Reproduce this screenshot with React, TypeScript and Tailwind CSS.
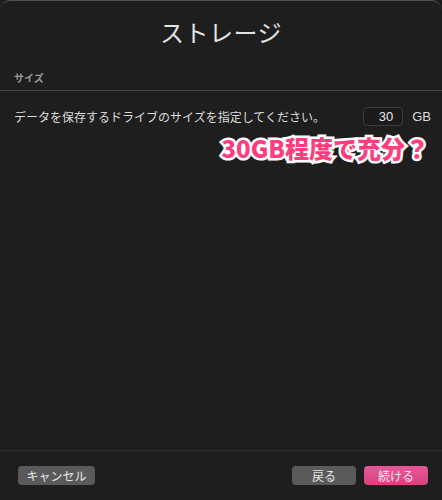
export default function App() {
  return (
    <div
      className="w-[442px] h-[500px] bg-[#1c1c1c] overflow-hidden"
      style={{ fontFamily: '"Noto Sans CJK JP", "Noto Sans", sans-serif' }}
    >
      <div className="flex flex-col h-full bg-[#1e1e1e] rounded-t-[10px] border-t border-[#505050]">
        {/* Title */}
        <h1 className="pt-[15px] text-center text-[24px] leading-[32px] text-[#e2e2e2] tracking-[0.5px]">
          ストレージ
        </h1>

        {/* Section label */}
        <div className="mt-[23px] px-[14px] text-[10px] leading-[14px] text-[#9a9a9a] font-bold">
          サイズ
        </div>
        <div className="mt-[5px] h-px bg-[#464646]" />

        {/* Size row */}
        <div className="mt-[16px] flex items-center px-[14px]">
          <span className="flex-1 text-[12px] leading-[18px] text-[#dcdcdc]">
            データを保存するドライブのサイズを指定してください。
          </span>
          <div className="w-[40px] h-[19px] rounded-[4px] border border-[#3c3c3c] bg-[#1b1b1b] flex items-center justify-end pr-[9px] text-[13px] text-[#e6e6e6] [font-family:'Liberation_Sans',sans-serif]">
            30
          </div>
          <span className="ml-[9px] mr-[-3px] text-[13px] text-[#dcdcdc] [font-family:'Liberation_Sans',sans-serif]">
            GB
          </span>
        </div>

        {/* Annotation */}
        <div className="mt-[5px] flex justify-end pr-[13px]">
          <span className="text-[24px] leading-[31px] font-black text-[#ff3d7c] [-webkit-text-stroke:5px_#ffffff] [paint-order:stroke_fill]">
            30GB程度で充分？
          </span>
        </div>

        <div className="flex-1" />

        {/* Footer */}
        <div className="h-px bg-[#303030]" />
        <div className="h-[49px] flex items-center px-[18px] pb-[1px]">
          <button className="w-[77px] h-[19px] rounded-[4px] bg-[#5a5a5a] text-[12px] leading-[19px] text-[#e8e8e8]">
            キャンセル
          </button>
          <div className="flex-1" />
          <button className="w-[64px] h-[19px] rounded-[4px] bg-[#5a5a5a] text-[12px] leading-[19px] text-[#e8e8e8]">
            戻る
          </button>
          <button className="ml-[8px] mr-[-4px] w-[64px] h-[19px] rounded-[4px] bg-gradient-to-b from-[#e8559a] to-[#d8437e] text-[12px] leading-[19px] text-[#fbeaf2]">
            続ける
          </button>
        </div>
      </div>
    </div>
  );
}
